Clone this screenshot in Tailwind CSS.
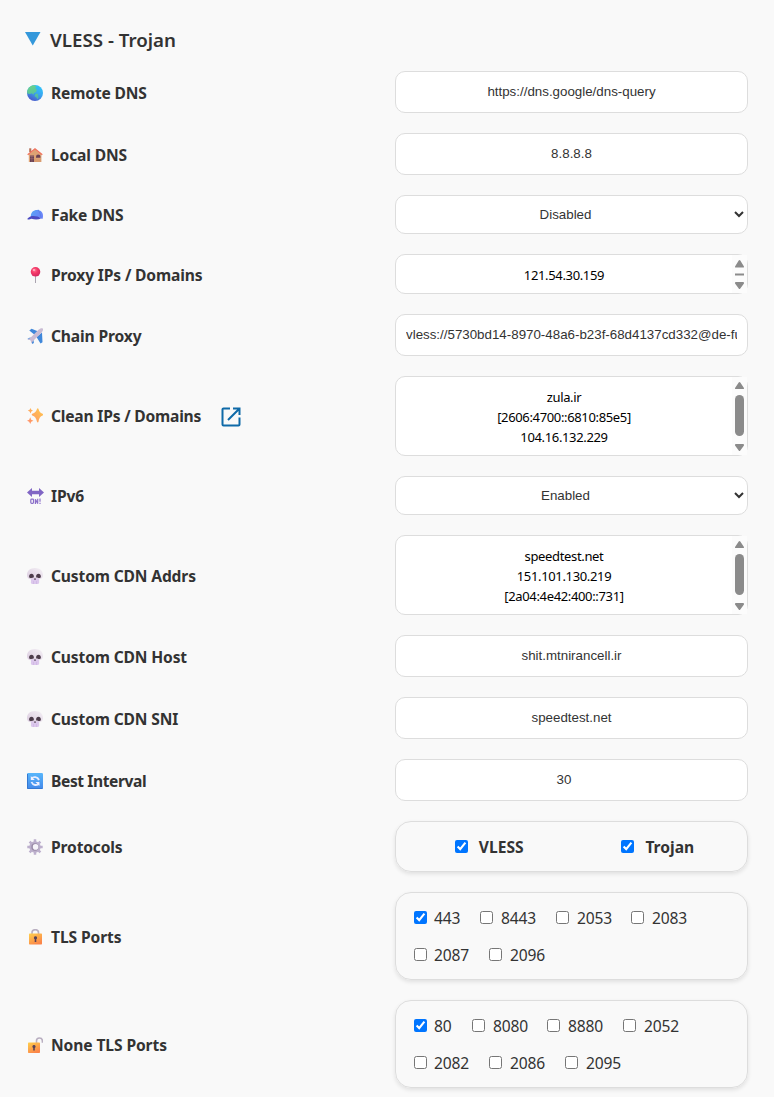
<!DOCTYPE html>
<html lang="en">
<head>
<meta charset="utf-8">
<title>VLESS - Trojan</title>
<script src="https://cdn.jsdelivr.net/npm/@tailwindcss/browser@4"></script>
</head>
<body class="h-[1097px] overflow-hidden bg-[#f9f9f9] font-['Noto_Sans','Open_Sans',sans-serif] text-[15.6px] leading-6 text-[#333]">
<svg width="0" height="0" class="absolute">
<defs>
<linearGradient id="gSea" x1="0.8" y1="0" x2="0.3" y2="1"><stop offset="0" stop-color="#2cc8fb"/><stop offset=".5" stop-color="#3aa5f0"/><stop offset="1" stop-color="#4a55c8"/></linearGradient>
<linearGradient id="gLand" x1="0.3" y1="0" x2="0.5" y2="1"><stop offset="0" stop-color="#6ad48a"/><stop offset="1" stop-color="#4fb9a8"/></linearGradient>
<linearGradient id="gCap" x1="0" y1="0" x2="1" y2=".4"><stop offset="0" stop-color="#57a5f5"/><stop offset="1" stop-color="#6b84f8"/></linearGradient>
<radialGradient id="gPin" cx=".4" cy=".35" r=".6"><stop offset="0" stop-color="#ff7391"/><stop offset=".5" stop-color="#f53a68"/><stop offset="1" stop-color="#d82b61"/></radialGradient>
<linearGradient id="gStar" x1="1" y1="0" x2="0" y2="1"><stop offset="0" stop-color="#ffca4d"/><stop offset="1" stop-color="#ff8b6c"/></linearGradient>
<linearGradient id="gSkull" x1="1" y1="0" x2="0" y2=".9"><stop offset="0" stop-color="#f4f0f5"/><stop offset="1" stop-color="#dccde0"/></linearGradient>
<linearGradient id="gBlue" x1="0" y1="0" x2="0" y2="1"><stop offset="0" stop-color="#58b6fb"/><stop offset="1" stop-color="#4389ea"/></linearGradient>
<linearGradient id="gLock" x1="0" y1="0" x2=".6" y2="1"><stop offset="0" stop-color="#ffd04c"/><stop offset="1" stop-color="#fb8549"/></linearGradient>
<symbol id="skull" viewBox="0 0 16 16"><path d="M8 0C3.400 0 .1 2.800 0 6.600c-.1 2.600 1 4.200 3.900 4.600h8.200c2.900-.4 4-2 3.900-4.600C15.900 2.800 12.600 0 8 0Z" fill="url(#gSkull)"/><path d="M4 10.500h8.100v4.300c0 .7-.5 1.200-1.200 1.200H5.100c-.7 0-1.200-.5-1.200-1.200Z" fill="#dcc8ec"/><path d="M6.500 13v3M9.500 13v3" stroke="#cbb0e2" stroke-width=".6"/><path d="M4.500 5.800C3.200 5.800 2 7 2.100 8.700c.1 1 .8 1.300 2.300 1.300s2.400-.2 2.500-1.400c.1-1.700-1.100-2.800-2.400-2.800ZM11.500 5.800c-1.300 0-2.500 1.100-2.400 2.800.1 1.200 1 1.400 2.500 1.400s2.200-.3 2.300-1.300c.1-1.700-1.100-2.900-2.400-2.900ZM8 9.800l1 1.600-.5.400-.5-.3-.5.300-.5-.4Z" fill="#4c3b4a"/></symbol>
</defs>
</svg>

<main class="flex flex-col px-[26px] pt-[26px]">
<h3 class="flex h-7 items-center text-[18.72px] font-semibold leading-7">
<svg class="-ml-px mr-[9px] mb-0.5 h-[14px] w-4" viewBox="0 0 16 14"><path d="M0 0h15.500L7.750 13.500Z" fill="#3498db"/></svg>
<span>VLESS - Trojan</span>
</h3>

<div class="mt-[17px] flex flex-col gap-5">
<div class="grid h-[42px] grid-cols-[369px_353px] items-center">
<label class="flex items-center gap-2 pt-0.5 font-bold tracking-[-0.15px]"><svg class="ml-px size-4" viewBox="0 0 16 16"><circle cx="8" cy="8" r="8" fill="url(#gSea)"/><path d="M1 4C2.400 1.800 4 .6 6.300.2c1.700.1 2.700.6 3 1.500-.2.700-1.500.9-1.400 1.600l1.500.4c.7.800-.1 1.500.2 2.300l-1 1.600-1.600.5-.6 1.700-1.700-1.500L3 9l-2.700-.6C0 7 .2 5.400 1 4ZM8 9.400l1.700-1 1.600 1-.3 1 .6 1.900-.9 2-1.700-2.400-1.300-.5Z" fill="url(#gLand)"/></svg><span>Remote DNS</span></label>
<input type="text" value="https://dns.google/dns-query" class="h-[42px] rounded-[10px] border border-[#ddd] bg-white px-2.5 pb-0.5 text-center font-['Liberation_Sans',sans-serif] text-[13.333px]">
</div>

<div class="grid h-[42px] grid-cols-[369px_353px] items-center">
<label class="flex items-center gap-2 pt-0.5 font-bold tracking-[-0.15px]"><svg class="ml-px size-4" viewBox="0 0 16 16"><path d="M2.200 1.300h2.100V5H2.200Z" fill="#b5715a"/><path d="M8 2l6.400 5.500V15H1.800V7.500Z" fill="#dda274"/><path d="M3 8.500h4V15H3Z" fill="#684054"/><path d="M3 9.500h4M3 11.700h4M4.900 8.500V15" stroke="#b88378" stroke-width=".4"/><path d="M9 9.800a2.200 2.200 0 0 1 4.400 0v.9H9Z" fill="#684054"/><path d="M.7 7.800L8 1.800l7.300 6" stroke="#f0705a" stroke-width="1.300" fill="none"/><path d="M7 12h7v3H7Z" fill="#d99c70"/></svg><span>Local DNS</span></label>
<input type="text" value="8.8.8.8" class="h-[42px] rounded-[10px] border border-[#ddd] bg-white px-2.5 pb-0.5 text-center font-['Liberation_Sans',sans-serif] text-[13.333px]">
</div>

<div class="grid h-[39px] grid-cols-[369px_353px] items-center">
<label class="flex items-center gap-2 font-bold tracking-[-0.15px]"><svg class="ml-px size-4" viewBox="0 0 16 16"><path d="M3.800 8.800C4 5 6.800 2.700 10.500 3l.6-.4.900.7c3 .8 4 3 4 5.600 0 1.500-.3 2.700-.8 3.200-2.600-2-6-2.600-10.900-1.800Z" fill="url(#gCap)"/><path d="M11 3c1.800 2 2.800 5 3 8.300" fill="none" stroke="#5374dc" stroke-width=".5"/><path d="M3.800 9.200c3.500-.5 7.500 0 10.200 2.200-2.500 1.200-5.800 1.500-9.500.3-1.500.3-2.700 1.400-4 .6-.8-.6 1.300-2.200 3.300-3.100Z" fill="#4b4bc2"/></svg><span>Fake DNS</span></label>
<select class="h-[39px] rounded-[10px] border border-[#ddd] bg-white py-2.5 pl-2.5 pr-2.5 text-center font-['Liberation_Sans',sans-serif] text-[13.333px] leading-4"><option>Disabled</option></select>
</div>

<div class="grid h-10 grid-cols-[369px_353px] items-center">
<label class="flex items-center gap-2 pt-0.5 font-bold tracking-[-0.15px]"><svg class="ml-px size-4" viewBox="0 0 16 16"><path d="M8.500 9v7" stroke="#aaa4b0" stroke-width="1"/><circle cx="8.500" cy="4.800" r="4.800" fill="url(#gPin)"/><ellipse cx="7" cy="3" rx="1.300" ry="1" fill="#ffb0bf"/></svg><span>Proxy IPs / Domains</span></label>
<div class="flex h-10 rounded-[10px] border border-[#ddd] bg-white">
<div class="flex-1 pt-[10px] text-center text-[13px] leading-5 tracking-[-0.35px] text-black">121.54.30.159</div>
<svg class="h-[38px] w-[15px] bg-[#fcfcfc]" viewBox="0 0 15 38" fill="#8b8b8b"><path d="M6.700 5.600 3.200 11.200c-.5.900-.1 1.300.6 1.300h7.400c.7 0 1.100-.5.600-1.300L8.300 5.600c-.5-.7-1.100-.7-1.600 0ZM3 18.500h9v2H3ZM6.700 33.400 3.200 28.800c-.5-.9-.1-1.800.6-1.800h7.400c.7 0 1.100.9.600 1.800l-3.500 4.600c-.5.700-1.100.7-1.600 0Z"/></svg>
</div>
</div>

<div class="grid h-[42px] grid-cols-[369px_353px] items-center">
<label class="flex items-center gap-2 pt-0.5 font-bold tracking-[-0.15px]"><svg class="ml-px size-4" viewBox="0 0 16 16"><path d="M2.300 2.400 4.600.8l7.400 3L8.500 7.500ZM15 4.500l.5 9.800-2 1.300-4-6.700ZM3 9.500l2.700 1L4 12.300.3 11ZM6.300 11l.6 4-1.700 1-.8-4Z" fill="#3f87da"/><path d="M15.700.4C14.600-.2 12.700.5 11.500 1.700L3.200 10 .6 11.500l3 .8.8 3.300L6 13.100l8.500-8.300c1.200-1.200 2-3.500 1.200-4.400Z" fill="#c9bcd4"/></svg><span>Chain Proxy</span></label>
<input type="text" value="vless://5730bd14-8970-48a6-b23f-68d4137cd332@de-full.privateip.net" class="h-[42px] rounded-[10px] border border-[#ddd] bg-white px-2.5 pb-0.5 text-center font-['Liberation_Sans',sans-serif] text-[13.333px]">
</div>

<div class="grid h-20 grid-cols-[369px_353px] items-center">
<label class="flex items-center gap-2 font-bold tracking-[-0.2px]"><svg class="ml-px size-4" viewBox="0 0 16 16" fill="url(#gStar)"><path d="M10 .9c.4-.8 1.200-.8 1.500 0 .8 2.700 1.600 3.900 4.100 4.900.6.300.6 1.300 0 1.600-2.500 1-3.300 2.400-4.100 6.400-.3.900-1.200.900-1.500 0-.9-4-2-5.400-4.700-6.400-.7-.3-.7-1.300 0-1.600 2.700-1 3.800-2.200 4.700-4.900ZM3.500 0l.8 1.800 1.700.8-1.700.8-.8 2-.9-2L.8 2.600l1.800-.8ZM3.200 9.300l1 2.400 2.300 1-2.300 1-1 2.300-1-2.300L0 12.700l2.200-1Z"/></svg><span class="-mt-px">Clean IPs / Domains</span>
<svg class="ml-3 mt-0.5 size-5" viewBox="0 0 20 20" fill="none" stroke="#0f6aa8" stroke-width="2"><path d="M9 1.500H2.500a1 1 0 0 0-1 1v15a1 1 0 0 0 1 1h15a1 1 0 0 0 1-1V10.500M12 1.500h6.500V8M18 2 7 13"/></svg></label>
<div class="flex h-20 rounded-[10px] border border-[#ddd] bg-white">
<div class="flex-1 pt-[10px] text-center text-[13px] leading-5 tracking-[-0.35px] text-black">zula.ir<br>[2606:4700::6810:85e5]<br>104.16.132.229</div>
<svg class="h-[78px] w-[15px] bg-[#fcfcfc]" viewBox="0 0 15 78" fill="#8b8b8b"><path d="M6.700 5.600 3.200 10.700c-.5.900-.1 1.300.6 1.300h7.400c.7 0 1.100-.5.600-1.300L8.300 5.600c-.5-.7-1.100-.7-1.600 0ZM6.700 73.400 3.200 68.800c-.5-.9-.1-1.800.6-1.800h7.400c.7 0 1.100.9.600 1.800l-3.500 4.600c-.5.700-1.100.7-1.600 0Z"/><rect x="3" y="18" width="9" height="41" rx="4.500"/></svg>
</div>
</div>

<div class="grid h-[39px] grid-cols-[369px_353px] items-center">
<label class="flex items-center gap-2 font-bold tracking-[-0.15px]"><svg class="ml-px h-4 w-[17px] -mr-px" viewBox="0 0 17 16"><path d="M0 4.400 5 0v2.800h7V0l5 4.400L12 9V6.200H5V9Z" fill="#8065c4"/><g fill="none" stroke="#8b6fc9" stroke-width="1.200"><rect x="3.800" y="11.200" width="2.700" height="4.200" rx=".8"/><path d="M8.400 16v-4.700l2.300 4.300V10.800M13 10.600v3.200M13 14.700v1.300"/></g></svg><span>IPv6</span></label>
<select class="h-[39px] rounded-[10px] border border-[#ddd] bg-white py-2.5 pl-2.5 pr-2.5 text-center font-['Liberation_Sans',sans-serif] text-[13.333px] leading-4"><option>Enabled</option></select>
</div>

<div class="grid h-20 grid-cols-[369px_353px] items-center">
<label class="flex items-center gap-2 pt-0.5 font-bold tracking-[-0.15px]"><svg class="ml-px size-4"><use href="#skull"/></svg><span>Custom CDN Addrs</span></label>
<div class="flex h-20 rounded-[10px] border border-[#ddd] bg-white">
<div class="flex-1 pt-[10px] text-center text-[13px] leading-5 tracking-[-0.35px] text-black">speedtest.net<br>151.101.130.219<br>[2a04:4e42:400::731]</div>
<svg class="h-[78px] w-[15px] bg-[#fcfcfc]" viewBox="0 0 15 78" fill="#8b8b8b"><path d="M6.700 5.600 3.200 10.700c-.5.900-.1 1.300.6 1.300h7.400c.7 0 1.100-.5.600-1.300L8.300 5.600c-.5-.7-1.100-.7-1.600 0ZM6.700 73.400 3.200 68.800c-.5-.9-.1-1.800.6-1.800h7.400c.7 0 1.100.9.600 1.800l-3.500 4.600c-.5.700-1.100.7-1.600 0Z"/><rect x="3" y="18" width="9" height="41" rx="4.500"/></svg>
</div>
</div>

<div class="grid h-[42px] grid-cols-[369px_353px] items-center">
<label class="flex items-center gap-2 pt-0.5 font-bold tracking-[-0.15px]"><svg class="ml-px size-4"><use href="#skull"/></svg><span>Custom CDN Host</span></label>
<input type="text" value="shit.mtnirancell.ir" class="h-[42px] rounded-[10px] border border-[#ddd] bg-white px-2.5 pb-0.5 text-center font-['Liberation_Sans',sans-serif] text-[13.333px]">
</div>

<div class="grid h-[42px] grid-cols-[369px_353px] items-center">
<label class="flex items-center gap-2 pt-0.5 font-bold tracking-[-0.15px]"><svg class="ml-px size-4"><use href="#skull"/></svg><span>Custom CDN SNI</span></label>
<input type="text" value="speedtest.net" class="h-[42px] rounded-[10px] border border-[#ddd] bg-white px-2.5 pb-0.5 text-center font-['Liberation_Sans',sans-serif] text-[13.333px]">
</div>

<div class="grid h-[42px] grid-cols-[369px_353px] items-center">
<label class="flex items-center gap-2 pt-0.5 font-bold tracking-[-0.4px]"><svg class="ml-px size-4" viewBox="0 0 16 16"><rect width="16" height="16" rx="1.300" fill="url(#gBlue)"/><path d="M.5 1v14.500h15" stroke="#3478d2" fill="none"/><g fill="none" stroke="#e7edff" stroke-width="1.900"><path d="M4.500 5.500C6.300 3.300 10.500 3.600 12 7M12 10.500C10 13 6 12.500 4.500 9"/></g><path d="M3.800 3v4h4ZM12.400 13V9h-4Z" fill="#f1f1ff"/></svg><span>Best Interval</span></label>
<input type="text" value="30" class="h-[42px] rounded-[10px] border border-[#ddd] bg-white pb-0.5 pl-2.5 pr-[25px] text-center font-['Liberation_Sans',sans-serif] text-[13.333px]">
</div>

<div class="grid h-[51px] grid-cols-[369px_353px] items-center">
<label class="flex items-center gap-2 pt-px font-bold tracking-[-0.15px]"><svg class="ml-px size-4" viewBox="0 0 16 16"><g stroke="#bdb0cd" stroke-width="2.500"><path d="M8 .3v15.400M.3 8h15.400M2.600 2.600l10.800 10.800M13.400 2.600 2.600 13.400"/></g><circle cx="8" cy="8" r="5.700" fill="#bcafcb"/><circle cx="8" cy="8" r="3.700" fill="#9a8ba7"/><circle cx="8.600" cy="7.900" r="2.800" fill="#f7f5fa"/></svg><span>Protocols</span></label>
<div class="grid h-[51px] grid-cols-2 items-center rounded-2xl border border-[#ddd] pl-[9px] pr-[5px] font-bold shadow-[0_2px_4px_rgba(0,0,0,0.1)]">
<label class="flex items-center justify-center gap-[11px]"><input type="checkbox" checked class="size-[13px]"><span>VLESS</span></label>
<label class="flex items-center justify-center gap-[11px]"><input type="checkbox" checked class="size-[13px]"><span>Trojan</span></label>
</div>
</div>

<div class="grid h-[88px] grid-cols-[369px_353px] items-center">
<label class="flex items-center gap-2 pt-0.5 font-bold tracking-[-0.1px]"><svg class="ml-px size-4" viewBox="0 0 16 16"><path d="M5 6V3.700c0-4 6.500-4 6.500 0V6" fill="none" stroke="#b9afc1" stroke-width="1.600"/><rect x="2" y="4.500" width="13" height="11" rx=".7" fill="url(#gLock)"/><path d="M8.500 7.300a1.600 1.600 0 0 1 .8 3v2.600H7.700v-2.600a1.600 1.600 0 0 1 .8-3Z" fill="#574158"/></svg><span>TLS Ports</span></label>
<div class="flex h-[88px] flex-col gap-[13px] rounded-2xl border border-[#ddd] px-[18px] pt-[13px] tracking-[-0.2px] shadow-[0_2px_4px_rgba(0,0,0,0.1)]">
<div class="flex h-6 gap-5">
<label class="flex w-[46px] items-center gap-[7px]"><input type="checkbox" checked class="mb-0.5 size-[13px]"><span>443</span></label>
<label class="flex w-[56px] items-center gap-2"><input type="checkbox" class="mb-0.5 size-[13px]"><span>8443</span></label>
<label class="flex w-[55px] items-center gap-2"><input type="checkbox" class="mb-0.5 size-[13px]"><span>2053</span></label>
<label class="flex w-[55px] items-center gap-2"><input type="checkbox" class="mb-0.5 size-[13px]"><span>2083</span></label>
</div>
<div class="flex h-6 gap-5">
<label class="flex w-[55px] items-center gap-[7px]"><input type="checkbox" class="mb-0.5 size-[13px]"><span>2087</span></label>
<label class="flex w-[55px] items-center gap-2"><input type="checkbox" class="mb-0.5 size-[13px]"><span>2096</span></label>
</div>
</div>
</div>

<div class="grid h-[88px] grid-cols-[369px_353px] items-center">
<label class="flex items-center gap-2 pt-0.5 font-bold tracking-[-0.1px]"><svg class="ml-px size-4" viewBox="0 0 16 16"><path d="M9.500 6V3.700c0-3.500 5.700-3.700 5.900 0v2.100" fill="none" stroke="#b9afc1" stroke-width="1.600"/><rect x="1" y="5.500" width="12" height="10.500" rx=".7" fill="url(#gLock)"/><path d="M7 8a1.600 1.600 0 0 1 .8 3v2.600H6.200V11A1.600 1.600 0 0 1 7 8Z" fill="#574158"/></svg><span>None TLS Ports</span></label>
<div class="flex h-[88px] flex-col gap-[13px] rounded-2xl border border-[#ddd] px-[18px] pt-[13px] tracking-[-0.2px] shadow-[0_2px_4px_rgba(0,0,0,0.1)]">
<div class="flex h-6 gap-5">
<label class="flex w-[38px] items-center gap-[7px]"><input type="checkbox" checked class="mb-0.5 size-[13px]"><span>80</span></label>
<label class="flex w-[55px] items-center gap-2"><input type="checkbox" class="mb-0.5 size-[13px]"><span>8080</span></label>
<label class="flex w-[56px] items-center gap-2"><input type="checkbox" class="mb-0.5 size-[13px]"><span>8880</span></label>
<label class="flex w-[55px] items-center gap-2"><input type="checkbox" class="mb-0.5 size-[13px]"><span>2052</span></label>
</div>
<div class="flex h-6 gap-5">
<label class="flex w-[55px] items-center gap-[7px]"><input type="checkbox" class="mb-0.5 size-[13px]"><span>2082</span></label>
<label class="flex w-[56px] items-center gap-2"><input type="checkbox" class="mb-0.5 size-[13px]"><span>2086</span></label>
<label class="flex w-[55px] items-center gap-2"><input type="checkbox" class="mb-0.5 size-[13px]"><span>2095</span></label>
</div>
</div>
</div>
</div>
</main>
</body>
</html>
